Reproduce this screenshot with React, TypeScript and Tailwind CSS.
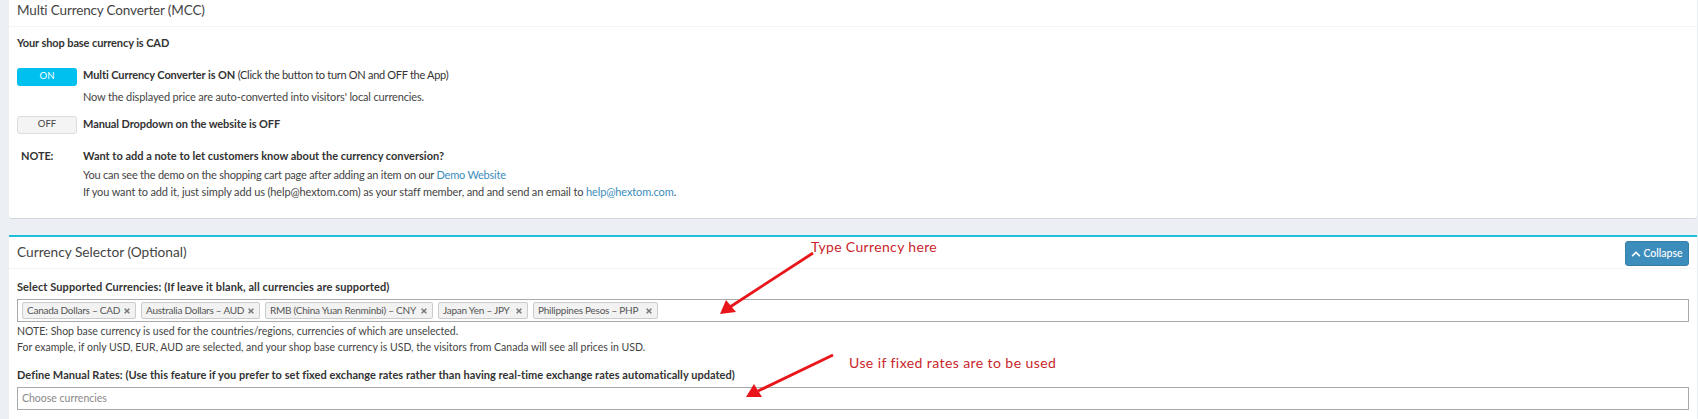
import React from 'react';
import { FaChevronUp, FaTimes } from 'react-icons/fa';

const currencies = [
  { label: 'Canada Dollars – CAD', width: 'w-[114px]' },
  { label: 'Australia Dollars – AUD', width: 'w-[119px]' },
  { label: 'RMB (China Yuan Renminbi) – CNY', width: 'w-[168px]' },
  { label: 'Japan Yen – JPY', width: 'w-[90px]' },
  { label: 'Philippines Pesos – PHP', width: 'w-[125px]' },
];

function Annotations() {
  return (
    <>
      <svg className="absolute left-0 top-0" width="1698" height="419">
        <line x1="813" y1="253" x2="730" y2="307" stroke="#e8161b" strokeWidth="2.8" />
        <polygon points="720,314 726,300 736,312" fill="#e8161b" />
        <line x1="833" y1="355" x2="758" y2="391" stroke="#e8161b" strokeWidth="2.8" />
        <polygon points="746,397 754,384 762,397" fill="#e8161b" />
      </svg>
      <span className="absolute left-[811px] top-[238px] text-[14px] leading-[18px] tracking-[0.35px] text-[#c9252b]">
        Type Currency here
      </span>
      <span className="absolute left-[849px] top-[354px] text-[14px] leading-[18px] tracking-[0.42px] text-[#c9252b]">
        Use if fixed rates are to be used
      </span>
    </>
  );
}

export default function App() {
  return (
    <div className="relative h-[419px] w-[1698px] overflow-hidden bg-[#ecf0f5] pl-[9px] pr-px font-[Lato,sans-serif] text-[11px] tracking-[-0.15px] text-[#333]">
      <section className="h-[219px] rounded-b-[3px] border-b border-[#d2d6de] bg-white">
        <div className="flex h-[27px] items-start border-b border-[#f4f4f4] pl-2 pt-px">
          <h3 className="text-[13.5px] leading-[18px] tracking-[-0.15px] text-[#444]">Multi Currency Converter (MCC)</h3>
        </div>
        <div className="pl-2">
          <p className="mt-[8px] h-4 font-bold leading-4 tracking-[-0.1px]">Your shop base currency is CAD</p>
          <div className="mt-[17px] flex gap-[6px]">
            <button className="h-[18px] w-[60px] rounded-[3px] bg-[#00c0ef] pb-px text-[9.5px] tracking-normal text-white">ON</button>
            <p className="leading-[14px] tracking-[-0.3px]">
              <b className="tracking-[-0.1px]">Multi Currency Converter is ON</b> (Click the button to turn ON and OFF the App)
            </p>
          </div>
          <p className="mt-[2px] pl-[66px] leading-[18px] text-[#444]">
            Now the displayed price are auto-converted into visitors' local currencies.
          </p>
          <div className="mt-[10px] flex gap-[6px]">
            <button className="h-[18px] w-[60px] rounded-[3px] border border-[#ddd] bg-[#f4f4f4] pb-px text-[9.5px] tracking-normal text-[#444]">OFF</button>
            <p className="mt-px font-bold leading-[14px] tracking-[-0.1px]">Manual Dropdown on the website is OFF</p>
          </div>
          <div className="mt-[14px] flex">
            <b className="w-[66px] pl-[4px] leading-4 tracking-[-0.1px]">NOTE:</b>
            <div className="text-[#444]">
              <p className="font-bold leading-4 tracking-normal text-[#333]">Want to add a note to let customers know about the currency conversion?</p>
              <p className="mt-[3px] leading-4 tracking-[-0.22px]">
                You can see the demo on the shopping cart page after adding an item on our <a className="text-[#3c8dbc]">Demo Website</a>
              </p>
              <p className="mt-px leading-4 tracking-[-0.13px]">
                If you want to add it, just simply add us (help@hextom.com) as your staff member, and and send an email to <a className="text-[#3c8dbc]">help@hextom.com</a>.
              </p>
            </div>
          </div>
        </div>
      </section>

      <section className="mt-4 h-[200px] border-t-2 border-[#1fc0d8] bg-white">
        <div className="flex h-[32px] items-start justify-between border-b border-[#f4f4f4] pl-2 pr-[8px]">
          <h3 className="mt-[6px] text-[13.7px] leading-[18px] tracking-normal text-[#444]">Currency Selector (Optional)</h3>
          <button className="mt-[4px] flex h-[25px] w-[64px] items-center justify-center gap-[2px] rounded-[3px] border border-[#367fa9] bg-[#3c8dbc] text-[10.5px] font-medium tracking-normal text-white">
            <FaChevronUp className="size-[10px]" />
            Collapse
          </button>
        </div>
        <div className="pl-2 pr-[8px]">
          <label className="mt-[10px] block h-[16px] font-bold leading-4 tracking-[0.1px]">
            Select Supported Currencies: (If leave it blank, all currencies are supported)
          </label>
          <div className="mt-[4px] flex h-[23px] items-center gap-[5px] border border-[#aaa] pl-[4px]">
            {currencies.map((c) => (
              <span
                key={c.label}
                className={`flex h-[17px] items-center justify-between whitespace-nowrap rounded-[2px] border border-[#ccc] bg-[#f2f2f2] px-[4px] text-[10px] tracking-[-0.25px] text-[#555] ${c.width}`}
              >
                {c.label}
                <FaTimes className="size-[8px] text-[#777]" />
              </span>
            ))}
          </div>
          <p className="mt-[1px] text-[10.5px] leading-4 tracking-normal text-[#444]">
            NOTE: Shop base currency is used for the countries/regions, currencies of which are unselected.
          </p>
          <p className="text-[10.5px] leading-4 tracking-normal text-[#444]">
            For example, if only USD, EUR, AUD are selected, and your shop base currency is USD, the visitors from Canada will see all prices in USD.
          </p>
          <label className="mt-[12px] block h-4 font-bold leading-4 tracking-[0.04px]">
            Define Manual Rates: (Use this feature if you prefer to set fixed exchange rates rather than having real-time exchange rates automatically updated)
          </label>
          <div className="mt-[4px] flex h-[23px] items-center border border-[#aaa] pl-[4px] text-[10.5px] tracking-normal text-[#888]">
            Choose currencies
          </div>
        </div>
      </section>
      <Annotations />
    </div>
  );
}
